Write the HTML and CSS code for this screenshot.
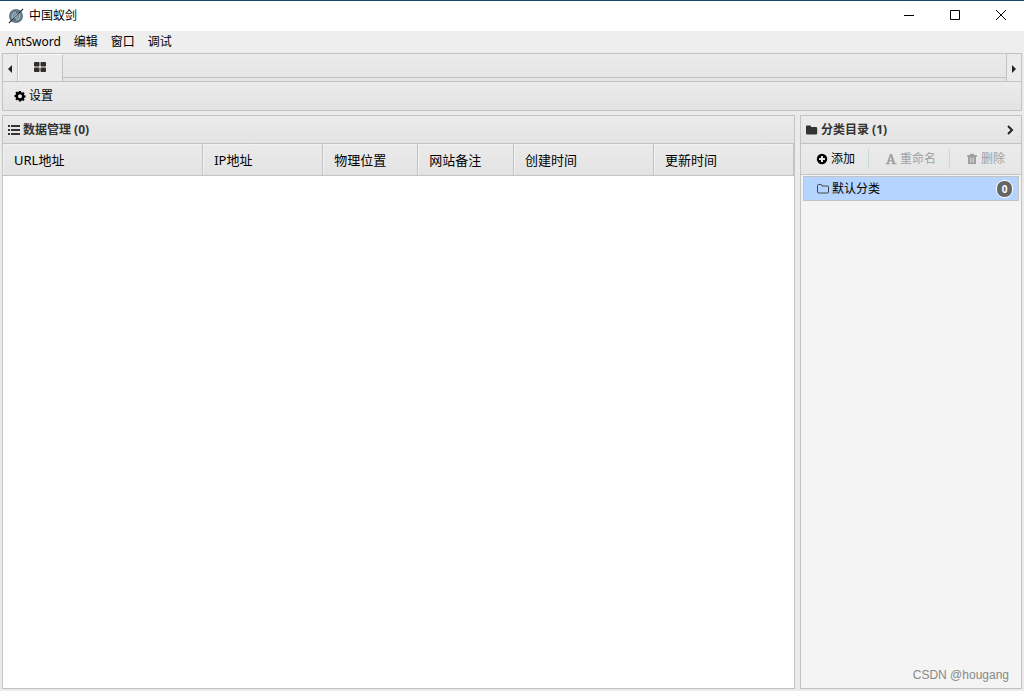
FILE: index.html
```html
<!DOCTYPE html>
<html lang="zh-CN">
<head>
<meta charset="utf-8">
<title>中国蚁剑</title>
<link rel="stylesheet" href="styles.css">
</head>
<body>
<header class="titlebar">
  <svg class="logo" viewBox="0 0 16 16" aria-hidden="true">
    <circle cx="8" cy="8" r="7" fill="#607985"/>
    <path d="M5 11C3 8 4.500 4.500 8 4.300M11 5C13 8 11.500 11.500 8 11.700" fill="none" stroke="#a9bec7" stroke-width="1.300"/>
    <path d="M6.500 9.500C6 7.500 7 6.500 9 6.500M9.500 7.500C9.500 9 8.500 9.800 7 9.800" fill="none" stroke="#c6d5db" stroke-width="1"/>
    <path d="M1 15L5 11M11 5L15 1" stroke="#2c3a41" stroke-width="1.300"/>
    <path d="M5 11L11 5" stroke="#435a65" stroke-width="1"/>
  </svg>
  <h1 class="title">中国蚁剑</h1>
  <div class="window-buttons">
    <button class="window-button" type="button" aria-label="最小化"><svg viewBox="0 0 12 12"><path d="M1 6.500h10"/></svg></button>
    <button class="window-button" type="button" aria-label="最大化"><svg viewBox="0 0 12 12"><path d="M1.500 1.500h9v9h-9z"/></svg></button>
    <button class="window-button" type="button" aria-label="关闭"><svg viewBox="0 0 12 12"><path d="M1 1l10 10M11 1L1 11"/></svg></button>
  </div>
</header>
<nav class="menubar">
  <button type="button">AntSword</button>
  <button type="button">编辑</button>
  <button type="button">窗口</button>
  <button type="button">调试</button>
</nav>
<main class="workspace">
  <div class="tabs">
    <button class="tab-arrow" type="button" aria-label="向左"><svg viewBox="0 0 4 8"><path d="M4 0v8L0 4z"/></svg></button>
    <button class="tab" type="button" aria-label="主页"><svg viewBox="0 0 12 10"><rect width="5.500" height="4.500" rx=".8"/><rect x="6.500" width="5.500" height="4.500" rx=".8"/><rect y="5.500" width="5.500" height="4.500" rx=".8"/><rect x="6.500" y="5.500" width="5.500" height="4.500" rx=".8"/></svg></button>
    <div class="tab-space"></div>
    <button class="tab-arrow tab-arrow-right" type="button" aria-label="向右"><svg viewBox="0 0 4 8"><path d="M0 0v8l4-4z"/></svg></button>
  </div>
  <div class="toolbar">
    <button type="button"><svg class="icon" viewBox="0 0 12 12"><path fill-rule="evenodd" d="M5 1h2l.3 1.300.9.400 1.100-.7 1.300 1.300-.7 1.100.4.900 1.200.2v1.900l-1.200.3-.4.900.7 1.100-1.300 1.300-1.100-.7-.9.400L7 11.500H5l-.3-1.300-.9-.4-1.100.7-1.300-1.300.7-1.100-.4-.9L.5 6.900V5l1.200-.3.4-.9-.7-1.100 1.300-1.300 1.100.7.900-.4zM6 4.200a2 2 0 1 0 0 4 2 2 0 0 0 0-4z"/></svg>设置</button>
  </div>
  <div class="panels">
    <section class="panel data-panel">
      <div class="panel-title"><svg class="icon" viewBox="0 0 12 12"><path d="M0 1h2v2H0zM3 1h9v2H3zM0 5h2v2H0zM3 5h9v2H3zM0 9h2v2H0zM3 9h9v2H3z"/></svg><h2>数据管理 (0)</h2></div>
      <table class="grid">
        <colgroup><col class="c-url"><col class="c-ip"><col class="c-place"><col class="c-note"><col class="c-time"><col class="c-time"></colgroup>
        <thead><tr><th>URL地址</th><th>IP地址</th><th>物理位置</th><th>网站备注</th><th>创建时间</th><th>更新时间</th></tr></thead>
      </table>
    </section>
    <aside class="panel side-panel">
      <div class="panel-title"><svg class="icon" viewBox="0 0 12 12"><path d="M0 2.500a1 1 0 0 1 1-1h3a1 1 0 0 1 1 1V3h5a1.200 1.200 0 0 1 1.200 1.200v5A1.200 1.200 0 0 1 10 10.400H1.200A1.200 1.200 0 0 1 0 9.200z"/></svg><h2>分类目录 (1)</h2>
        <button class="collapse" type="button" aria-label="折叠"><svg viewBox="0 0 8 10"><path d="M2 1l4 4-4 4"/></svg></button></div>
      <div class="side-tools">
        <button type="button"><svg class="icon" viewBox="0 0 12 12"><path fill-rule="evenodd" d="M6 .8a5.200 5.200 0 1 0 0 10.400A5.200 5.200 0 0 0 6 .8zM5 3h2v2h2v2H7v2H5V7H3V5h2z"/></svg>添加</button>
        <button type="button" disabled><svg class="icon" viewBox="0 0 12 12"><path fill-rule="evenodd" d="M5 1h2l3 9 1.500.3v.9H6.600v-.9l1-.3-.5-1.600H4.200L3.700 10l1.200.3v.9H.5v-.9L1.900 10zM5.500 3.800L4.600 7.200h2.200z"/></svg>重命名</button>
        <button type="button" disabled><svg class="icon" viewBox="0 0 12 12"><path fill-rule="evenodd" d="M4 2V.8h4V2h3v1.500h-1V11H2V3.500H1V2zM4 4.500v5h.6v-5zM5.700 4.500v5h.6v-5zM7.400 4.500v5H8v-5z"/></svg>删除</button>
      </div>
      <ul class="categories">
        <li class="category"><svg class="icon" viewBox="0 0 12 12"><path d="M.5 2.500a1 1 0 0 1 1-1h2.300a1 1 0 0 1 1 1V3h5.700a1 1 0 0 1 1 1v5a1 1 0 0 1-1 1h-9a1 1 0 0 1-1-1z" fill="none" stroke="#444"/></svg><span>默认分类</span><span class="badge">0</span></li>
      </ul>
      <p class="watermark">CSDN @hougang</p>
    </aside>
  </div>
</main>
</body>
</html>
```

FILE: styles.css
```css
* { box-sizing: border-box; }

body {
  margin: 0;
  height: 100vh;
  display: flex;
  flex-direction: column;
  background: #ebebeb;
  color: #000;
  font: 12px/16px "Noto Sans", "Noto Sans CJK SC", sans-serif;
}

button {
  margin: 0;
  padding: 0;
  border: 0;
  background: none;
  color: inherit;
  font: inherit;
  white-space: nowrap;
}

h1, h2, p, ul { margin: 0; padding: 0; font: inherit; }
svg { display: block; flex: none; }
.icon { width: 12px; height: 12px; fill: currentColor; }

.titlebar {
  flex: none;
  display: flex;
  align-items: center;
  height: 31px;
  padding-left: 8px;
  border-top: 1px solid #1c4668;
  background: #fff;
}
.logo { width: 16px; height: 16px; margin-right: 5px; }
.window-buttons { display: flex; margin-left: auto; }
.window-button {
  display: flex;
  align-items: center;
  justify-content: center;
  width: 46px;
  height: 30px;
  padding-bottom: 2px;
}
.window-button svg { width: 12px; height: 12px; fill: none; stroke: #000; }

.menubar {
  flex: none;
  display: flex;
  align-items: center;
  gap: 13px;
  height: 22px;
  padding: 0 6px;
  background: #eee;
}

.workspace {
  flex: 1;
  min-height: 0;
  display: flex;
  flex-direction: column;
  padding: 0 2px 2px;
}

.tabs {
  flex: none;
  display: flex;
  height: 28px;
  border: 1px solid #c3c3c3;
  border-bottom: 0;
  background: linear-gradient(#ebebeb, #e4e4e4);
}
.tab-arrow {
  display: flex;
  align-items: center;
  justify-content: center;
  width: 15px;
  padding-top: 2px;
  border-right: 1px solid #c3c3c3;
  background: #ebebeb;
}
.tab-arrow-right { border-right: 0; border-left: 1px solid #c3c3c3; }
.tab-arrow svg { width: 4px; height: 8px; fill: #222; }
.tab {
  display: flex;
  align-items: center;
  justify-content: center;
  width: 45px;
  padding: 0 2px 2px 0;
  border: 1px solid #fafafa;
  border-right-color: #c3c3c3;
  border-bottom: 0;
  background: #ebebeb;
}
.tab svg { width: 12px; height: 10px; fill: #332e2a; }
.tab-space { flex: 1; height: 24px; border-bottom: 1px solid #c3c3c3; }

.toolbar {
  flex: none;
  display: flex;
  align-items: center;
  height: 30px;
  padding-left: 11px;
  border: 1px solid #c3c3c3;
  background: linear-gradient(#ebebeb, #e3e3e3);
}
.toolbar button, .side-tools button {
  display: flex;
  align-items: center;
  gap: 3px;
}

.panels {
  flex: 1;
  min-height: 0;
  display: flex;
  gap: 5px;
  padding-top: 4px;
}
.panel {
  display: flex;
  flex-direction: column;
  border: 1px solid #c3c3c3;
}
.data-panel { flex: 1; min-width: 0; background: #fff; }
.side-panel { flex: none; width: 222px; background: #f4f4f4; }

.panel-title {
  flex: none;
  display: flex;
  align-items: center;
  gap: 3px;
  height: 28px;
  padding: 0 5px;
  border-bottom: 1px solid #c3c3c3;
  background: linear-gradient(#ebebeb, #e3e3e3);
  color: #333;
  font-weight: bold;
}
.collapse { margin-left: auto; padding: 0 2px; }
.collapse svg { width: 8px; height: 10px; fill: none; stroke: #222; stroke-width: 2; }

.grid {
  width: 100%;
  table-layout: fixed;
  border-collapse: separate;
  border-spacing: 0;
  font-size: 13px;
}
.c-url { width: 25.3%; }
.c-ip { width: 15.2%; }
.c-place { width: 12%; }
.c-note { width: 12.1%; }
.c-time { width: 17.7%; }
.grid th {
  height: 32px;
  padding: 0 11px;
  border: solid #c3c3c3;
  border-width: 0 1px 1px 0;
  box-shadow: inset 1px 1px #f2f2f2;
  background: linear-gradient(#ebebeb, #e3e3e3);
  text-align: left;
  font-weight: normal;
}

.side-tools {
  flex: none;
  display: flex;
  align-items: center;
  height: 31px;
  border-bottom: 1px solid #c3c3c3;
  background: linear-gradient(#ebebeb, #e6e6e6);
}
.side-tools button { height: 20px; padding: 0 13px 0 15px; }
.side-tools button + button { padding-left: 16px; border-left: 1px solid #c5d9df; }
.side-tools button:disabled { color: #a0a0a0; }
.side-tools button:last-child { padding-right: 0; }

.categories { padding: 1px 2px; list-style: none; }
.category {
  display: flex;
  align-items: center;
  gap: 3px;
  height: 25px;
  padding: 0 5px 0 13px;
  border: 1px solid #c3c3c3;
  background: #b5d4ff;
}
.badge {
  width: 17px;
  height: 18px;
  margin-left: auto;
  border: 1px solid #fff;
  border-radius: 8px;
  background: #666;
  color: #fff;
  font-size: 10px;
  font-weight: bold;
  text-align: center;
}
.watermark {
  margin-top: auto;
  padding: 0 12px 5px 0;
  color: #888;
  text-align: right;
  font-family: "Liberation Sans", sans-serif;
}
```
